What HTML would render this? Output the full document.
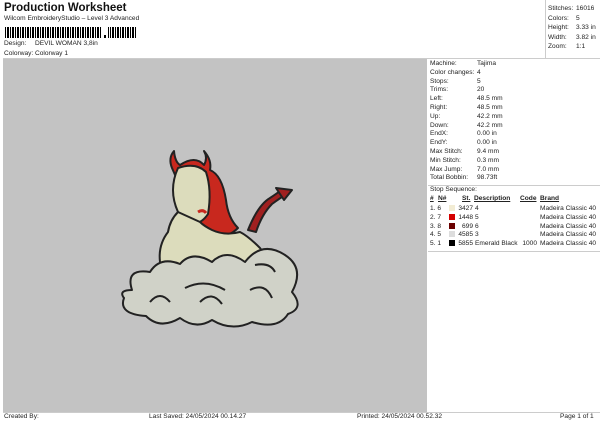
<!DOCTYPE html>
<html><head><style>
body{margin:0;width:600px;height:424px;background:#fff;font-family:"Liberation Sans",sans-serif;position:relative;overflow:hidden;font-size:6.6px;color:#222}
.a{position:absolute;white-space:nowrap;line-height:1}
</style></head><body>
<div class="a" style="left:4px;top:3px;font-size:11.5px;font-weight:bold;color:#111">Production Worksheet</div>
<div class="a" style="left:4px;top:16px">Wilcom EmbroideryStudio – Level 3 Advanced</div>
<svg class="a" style="left:5px;top:27px" width="135" height="12">
<defs><pattern id="bc" width="5" height="12" patternUnits="userSpaceOnUse"><rect x="0" width="1" height="12" fill="#000"/><rect x="2" width="2" height="12" fill="#000"/></pattern></defs>
<rect x="0" y="0" width="96" height="11" fill="url(#bc)"/><rect x="99" y="8" width="2" height="3" fill="#000"/><rect x="103" y="0" width="28" height="11" fill="url(#bc)"/></svg>
<div class="a" style="left:4px;top:41px">Design:</div><div class="a" style="left:35px;top:41px">DEVIL WOMAN 3,8in</div>
<div class="a" style="left:4px;top:51px">Colorway:</div><div class="a" style="left:35px;top:51px">Colorway 1</div>
<div class="a" style="left:545px;top:0;width:1px;height:58px;background:#ccc"></div>
<div class="a" style="left:548px;top:4px;line-height:9.5px">Stitches:<br>Colors:<br>Height:<br>Width:<br>Zoom:</div>
<div class="a" style="left:576px;top:4px;line-height:9.5px">16016<br>5<br>3.33 in<br>3.82 in<br>1:1</div>
<div class="a" style="left:3px;top:58px;width:597px;height:1px;background:#ccc"></div>
<div class="a" style="left:3px;top:59px;width:424px;height:353px;background:#c3c3c3"></div>
<div class="a" style="left:430px;top:60px;line-height:8.8px">Machine:<br>Color changes:<br>Stops:<br>Trims:<br>Left:<br>Right:<br>Up:<br>Down:<br>EndX:<br>EndY:<br>Max Stitch:<br>Min Stitch:<br>Max Jump:<br>Total Bobbin:</div>
<div class="a" style="left:477px;top:60px;line-height:8.8px">Tajima<br>4<br>5<br>20<br>48.5 mm<br>48.5 mm<br>42.2 mm<br>42.2 mm<br>0.00 in<br>0.00 in<br>9.4 mm<br>0.3 mm<br>7.0 mm<br>98.73ft</div>
<div class="a" style="left:428px;top:185px;width:172px;height:1px;background:#ccc"></div>
<div class="a" style="left:430px;top:187px">Stop Sequence:</div>
<div class="a" style="left:430px;top:196px;font-weight:bold;text-decoration:underline">#</div>
<div class="a" style="left:438px;top:196px;font-weight:bold;text-decoration:underline">N#</div>
<div class="a" style="left:462px;top:196px;font-weight:bold;text-decoration:underline">St.</div>
<div class="a" style="left:474px;top:196px;font-weight:bold;text-decoration:underline">Description</div>
<div class="a" style="left:520px;top:196px;font-weight:bold;text-decoration:underline">Code</div>
<div class="a" style="left:540px;top:196px;font-weight:bold;text-decoration:underline">Brand</div>
<div class="a" style="left:430px;top:205px;line-height:8.8px">1. 6<br>2. 7<br>3. 8<br>4. 5<br>5. 1</div>
<div class="a" style="left:449px;top:205px;width:6px;height:6px;background:#f2ecd4"></div>
<div class="a" style="left:449px;top:214px;width:6px;height:6px;background:#d40000"></div>
<div class="a" style="left:449px;top:223px;width:6px;height:6px;background:#6a0000"></div>
<div class="a" style="left:449px;top:231px;width:6px;height:6px;background:#ddd"></div>
<div class="a" style="left:449px;top:240px;width:6px;height:6px;background:#000"></div>
<div class="a" style="left:453px;top:205px;width:20px;text-align:right;line-height:8.8px">3427<br>1448<br>699<br>4585<br>5855</div>
<div class="a" style="left:475px;top:205px;line-height:8.8px">4<br>5<br>6<br>3<br>Emerald Black</div>
<div class="a" style="left:520px;top:205px;width:17px;text-align:right;line-height:8.8px"><br><br><br><br>1000</div>
<div class="a" style="left:540px;top:205px;line-height:8.8px">Madeira Classic 40<br>Madeira Classic 40<br>Madeira Classic 40<br>Madeira Classic 40<br>Madeira Classic 40</div>
<div class="a" style="left:428px;top:251px;width:172px;height:1px;background:#ccc"></div>
<svg class="a" style="left:0;top:0" width="600" height="424">
<g stroke="#222" stroke-width="2" stroke-linejoin="round">
<path d="M248 230 Q258 205 270 198 Q285 188 280 190 L290 192 Q280 198 272 204 Q262 214 256 232 Z" fill="#a02020"/>
<path d="M276 188 L292 190 L284 200 Z" fill="#a02020"/>
<path d="M172 168 Q168 158 174 151 Q175 162 180 165 Q195 155 204 165 Q208 158 204 151 Q212 160 210 170 Q222 175 226 200 Q228 218 238 228 Q230 236 218 238 L200 232 Z" fill="#c8281e"/>
<path d="M178 168 Q196 162 206 172 Q212 190 208 214 Q200 226 190 222 L178 212 Q168 190 178 168Z" fill="#dcdcbc"/>
<path d="M178 212 Q170 220 168 232 Q158 245 160 262 Q162 280 180 282 L260 282 Q272 262 260 248 Q248 236 240 232 Q225 236 212 230 Q204 226 200 222 Z" fill="#dcdcbc"/>
<path d="M132 290 Q125 268 150 272 Q160 256 180 264 Q192 250 212 262 Q226 248 245 262 Q262 240 285 255 Q305 268 292 292 Q305 308 288 314 Q278 330 252 322 Q232 332 212 320 Q196 330 180 318 Q160 330 146 316 Q118 314 124 298 Q118 290 132 290Z" fill="#d0d2c8"/>
<path d="M150 302 Q160 290 170 302 M200 302 Q212 290 222 304 M250 290 Q265 282 272 298 M185 288 Q205 278 225 290 M255 265 Q270 262 275 272" fill="none"/>
</g>
<path d="M198 212 Q203 209 206 213" stroke="#c8281e" stroke-width="3" fill="none"/>
</svg>
<div class="a" style="left:3px;top:412px;width:597px;height:1px;background:#ccc"></div>
<div class="a" style="left:4px;top:414px">Created By:</div>
<div class="a" style="left:149px;top:414px">Last Saved: 24/05/2024 00.14.27</div>
<div class="a" style="left:357px;top:414px">Printed: 24/05/2024 00.52.32</div>
<div class="a" style="left:560px;top:414px">Page 1 of 1</div>
</body></html>
